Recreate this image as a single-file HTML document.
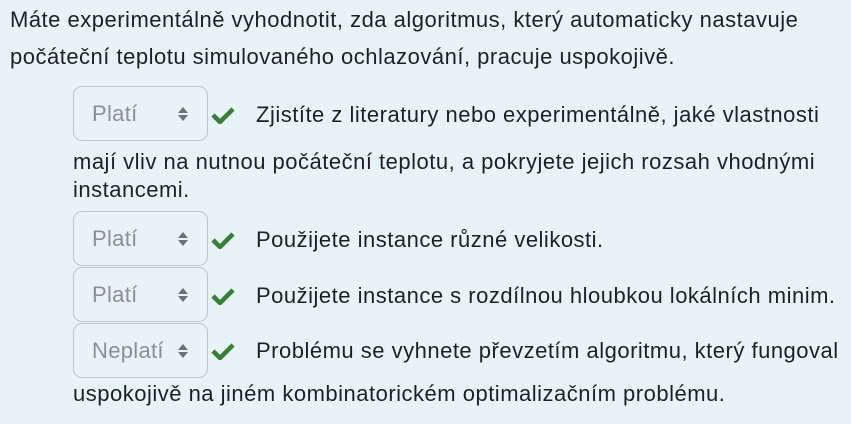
<!DOCTYPE html>
<html><head><meta charset="utf-8"><style>
body{margin:0;width:851px;height:424px;background:#e7f3f5;font-family:"Liberation Sans",sans-serif;color:#1d2125;position:relative;overflow:hidden}
.t{position:absolute;font-size:22px;letter-spacing:0.5px;line-height:28px;white-space:nowrap}
.s{position:absolute;left:73px;width:133px;height:53px;border:1px solid #bfc6ca;border-radius:9px;background:#e9f2f4;box-sizing:content-box}
.s span{position:absolute;left:18px;top:13px;font-size:22px;letter-spacing:0.3px;line-height:28px;color:#8a9096}
.s svg{position:absolute;left:103px;top:18px}
.c{position:absolute;left:211px}
</style></head><body>
<div class="t" style="left:10px;top:6px">Máte experimentálně vyhodnotit, zda algoritmus, který automaticky nastavuje</div>
<div class="t" style="left:10px;top:43px">počáteční teplotu simulovaného ochlazování, pracuje uspokojivě.</div>

<div class="s" style="top:86px"><span>Platí</span><svg width="12" height="18"><path d="M1 8L6 2L11 8Z M1 10L6 16L11 10Z" fill="#6c7378"/></svg></div>
<svg class="c" style="top:106px" width="24" height="18"><path d="M2 9L9 16L22 3" stroke="#3a7d3a" stroke-width="4.5" fill="none"/></svg>
<div class="t" style="left:256px;top:101px">Zjistíte z literatury nebo experimentálně, jaké vlastnosti</div>
<div class="t" style="left:73px;top:148px">mají vliv na nutnou počáteční teplotu, a pokryjete jejich rozsah vhodnými</div>
<div class="t" style="left:73px;top:176px">instancemi.</div>

<div class="s" style="top:211px"><span>Platí</span><svg width="12" height="18"><path d="M1 8L6 2L11 8Z M1 10L6 16L11 10Z" fill="#6c7378"/></svg></div>
<svg class="c" style="top:231px" width="24" height="18"><path d="M2 9L9 16L22 3" stroke="#3a7d3a" stroke-width="4.5" fill="none"/></svg>
<div class="t" style="left:256px;top:226px">Použijete instance různé velikosti.</div>

<div class="s" style="top:267px"><span>Platí</span><svg width="12" height="18"><path d="M1 8L6 2L11 8Z M1 10L6 16L11 10Z" fill="#6c7378"/></svg></div>
<svg class="c" style="top:287px" width="24" height="18"><path d="M2 9L9 16L22 3" stroke="#3a7d3a" stroke-width="4.5" fill="none"/></svg>
<div class="t" style="left:256px;top:282px">Použijete instance s rozdílnou hloubkou lokálních minim.</div>

<div class="s" style="top:323px"><span>Neplatí</span><svg width="12" height="18"><path d="M1 8L6 2L11 8Z M1 10L6 16L11 10Z" fill="#6c7378"/></svg></div>
<svg class="c" style="top:342px" width="24" height="18"><path d="M2 9L9 16L22 3" stroke="#3a7d3a" stroke-width="4.5" fill="none"/></svg>
<div class="t" style="left:256px;top:337px">Problému se vyhnete převzetím algoritmu, který fungoval</div>
<div class="t" style="left:73px;top:380px">uspokojivě na jiném kombinatorickém optimalizačním problému.</div>
</body></html>
